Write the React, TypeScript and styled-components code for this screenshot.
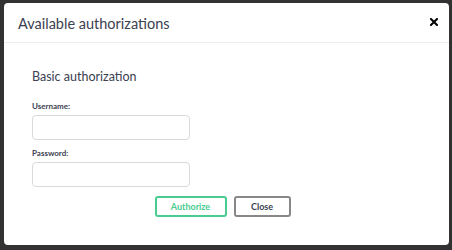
import styled, { createGlobalStyle } from 'styled-components';

const GlobalStyle = createGlobalStyle`
  html, body {
    margin: 0;
    padding: 0;
    background: #323232;
  }
  * {
    box-sizing: border-box;
  }
`;

const Backdrop = styled.div`
  width: 452px;
  height: 250px;
  padding: 3px 3px 5px 4px;
  background: #323232;
  font-family: 'Lato', 'Open Sans', sans-serif;
`;

const Modal = styled.div`
  height: 242px;
  background: #fff;
  border-radius: 4px;
  display: flex;
  flex-direction: column;
`;

const Header = styled.div`
  height: 40px;
  display: flex;
  align-items: center;
  justify-content: space-between;
  padding: 0 11px 0 14px;
  border-bottom: 1px solid #ededed;
`;

const Title = styled.h3`
  margin: 0;
  font-size: 14.5px;
  font-weight: 400;
  color: #3b4151;
  padding-top: 1px;
`;

const CloseIcon = styled.button`
  border: 0;
  background: none;
  padding: 0;
  width: 8px;
  height: 8px;
  margin-bottom: 1px;
  cursor: pointer;
  display: flex;
`;

const Content = styled.div`
  padding: 26px 28px 0 28px;
  display: flex;
  flex-direction: column;
`;

const SectionTitle = styled.h4`
  margin: 0 0 16px;
  font-size: 12.5px;
  line-height: 16px;
  font-weight: 400;
  color: #3b4151;
`;

const Label = styled.label`
  display: block;
  font-size: 8px;
  line-height: 10px;
  font-weight: 700;
  color: #3b4151;
  margin-bottom: 4px;
`;

const Input = styled.input`
  display: block;
  width: 158px;
  height: 25px;
  border: 1px solid #d9d9d9;
  border-radius: 4px;
  background: #fff;
  margin: 0 0 8px;
  outline: none;
`;

const Buttons = styled.div`
  display: flex;
  justify-content: center;
  gap: 7px;
  padding-right: 8px;
  margin-top: 1px;
`;

const Button = styled.button<{ $tone: 'green' | 'gray' }>`
  height: 21px;
  padding: 0;
  width: ${(p) => (p.$tone === 'green' ? '72px' : '57px')};
  border-radius: 3px;
  background: #fff;
  font-family: 'Lato', 'Open Sans', sans-serif;
  font-size: 9px;
  font-weight: 700;
  border: 2px solid ${(p) => (p.$tone === 'green' ? '#49cc90' : '#888')};
  color: ${(p) => (p.$tone === 'green' ? '#49cc90' : '#3b4151')};
  cursor: pointer;
`;

export default function App() {
  return (
    <>
      <GlobalStyle />
      <Backdrop>
        <Modal>
          <Header>
            <Title>Available authorizations</Title>
            <CloseIcon aria-label="Close">
              <svg width="8" height="8" viewBox="0 0 8 8">
                <path d="M1 1 L7 7 M7 1 L1 7" stroke="#000" strokeWidth="2" strokeLinecap="square" />
              </svg>
            </CloseIcon>
          </Header>
          <Content>
            <SectionTitle>Basic authorization</SectionTitle>
            <Label htmlFor="username">Username:</Label>
            <Input id="username" type="text" />
            <Label htmlFor="password">Password:</Label>
            <Input id="password" type="password" />
            <Buttons>
              <Button $tone="green">Authorize</Button>
              <Button $tone="gray">Close</Button>
            </Buttons>
          </Content>
        </Modal>
      </Backdrop>
    </>
  );
}
